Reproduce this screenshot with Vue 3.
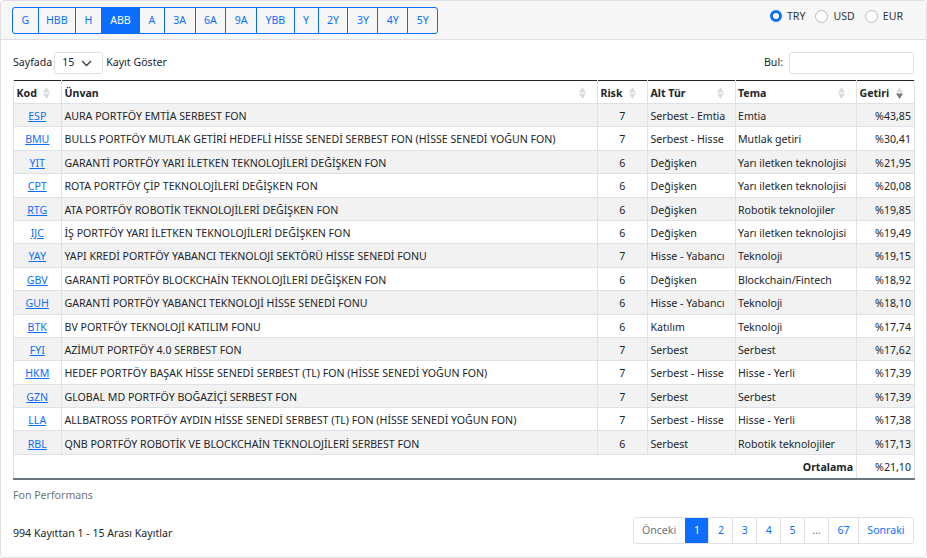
<script setup>
const periods = ['G', 'HBB', 'H', 'ABB', 'A', '3A', '6A', '9A', 'YBB', 'Y', '2Y', '3Y', '4Y', '5Y']
const currencies = ['TRY', 'USD', 'EUR']
const pages = ['1', '2', '3', '4', '5', '…', '67']

const funds = [
  ['ESP', 'AURA PORTFÖY EMTİA SERBEST FON', 7, 'Serbest - Emtia', 'Emtia', '%43,85'],
  ['BMU', 'BULLS PORTFÖY MUTLAK GETİRİ HEDEFLİ HİSSE SENEDİ SERBEST FON (HİSSE SENEDİ YOĞUN FON)', 7, 'Serbest - Hisse', 'Mutlak getiri', '%30,41'],
  ['YIT', 'GARANTİ PORTFÖY YARI İLETKEN TEKNOLOJİLERİ DEĞİŞKEN FON', 6, 'Değişken', 'Yarı iletken teknolojisi', '%21,95'],
  ['CPT', 'ROTA PORTFÖY ÇİP TEKNOLOJİLERİ DEĞİŞKEN FON', 6, 'Değişken', 'Yarı iletken teknolojisi', '%20,08'],
  ['RTG', 'ATA PORTFÖY ROBOTİK TEKNOLOJİLERİ DEĞİŞKEN FON', 6, 'Değişken', 'Robotik teknolojiler', '%19,85'],
  ['IJC', 'İŞ PORTFÖY YARI İLETKEN TEKNOLOJİLERİ DEĞİŞKEN FON', 6, 'Değişken', 'Yarı iletken teknolojisi', '%19,49'],
  ['YAY', 'YAPI KREDİ PORTFÖY YABANCI TEKNOLOJİ SEKTÖRÜ HİSSE SENEDİ FONU', 7, 'Hisse - Yabancı', 'Teknoloji', '%19,15'],
  ['GBV', 'GARANTİ PORTFÖY BLOCKCHAİN TEKNOLOJİLERİ DEĞİŞKEN FON', 6, 'Değişken', 'Blockchain/Fintech', '%18,92'],
  ['GUH', 'GARANTİ PORTFÖY YABANCI TEKNOLOJİ HİSSE SENEDİ FONU', 6, 'Hisse - Yabancı', 'Teknoloji', '%18,10'],
  ['BTK', 'BV PORTFÖY TEKNOLOJİ KATILIM FONU', 6, 'Katılım', 'Teknoloji', '%17,74'],
  ['FYI', 'AZİMUT PORTFÖY 4.0 SERBEST FON', 7, 'Serbest', 'Serbest', '%17,62'],
  ['HKM', 'HEDEF PORTFÖY BAŞAK HİSSE SENEDİ SERBEST (TL) FON (HİSSE SENEDİ YOĞUN FON)', 7, 'Serbest - Hisse', 'Hisse - Yerli', '%17,39'],
  ['GZN', 'GLOBAL MD PORTFÖY BOĞAZİÇİ SERBEST FON', 7, 'Serbest', 'Serbest', '%17,39'],
  ['LLA', 'ALLBATROSS PORTFÖY AYDIN HİSSE SENEDİ SERBEST (TL) FON (HİSSE SENEDİ YOĞUN FON)', 7, 'Serbest - Hisse', 'Hisse - Yerli', '%17,38'],
  ['RBL', 'QNB PORTFÖY ROBOTİK VE BLOCKCHAİN TEKNOLOJİLERİ SERBEST FON', 6, 'Serbest', 'Robotik teknolojiler', '%17,13']
]

const columns = ['Kod', 'Ünvan', 'Risk', 'Alt Tür', 'Tema']
</script>

<template>
  <div class="card">
    <header class="card__head">
      <div class="periods">
        <button v-for="p in periods" :key="p" :class="{ active: p === 'ABB' }">{{ p }}</button>
      </div>
      <div class="currencies">
        <label v-for="c in currencies" :key="c">
          <i :class="{ on: c === 'TRY' }" />{{ c }}
        </label>
      </div>
    </header>

    <div class="card__body">
      <div class="tools">
        <div class="tools__len">
          Sayfada
          <span class="select">15
            <svg width="11" height="7" viewBox="0 0 11 7"><path d="M1 1l4.500 4.500L10 1" fill="none" stroke="#343a40" stroke-width="1.300" /></svg>
          </span>
          Kayıt Göster
        </div>
        <div class="tools__find">Bul: <span class="input" /></div>
      </div>

      <table>
        <colgroup>
          <col class="c-kod"><col class="c-unvan"><col class="c-risk"><col class="c-alt"><col class="c-tema"><col class="c-getiri">
        </colgroup>
        <thead>
          <tr>
            <th v-for="c in columns" :key="c">
              {{ c }}
              <svg class="sort" width="7" height="12" viewBox="0 0 7 12"><path d="M3.500 0L7 5.500H0zM3.500 12L0 6.500h7z" fill="#dcdcdc" /></svg>
            </th>
            <th>
              Getiri
              <svg class="sort" width="7" height="12" viewBox="0 0 7 12"><path d="M3.500 0L7 5.500H0z" fill="#dcdcdc" /><path d="M3.500 12L0 6.500h7z" fill="#757575" /></svg>
            </th>
          </tr>
        </thead>
        <tbody>
          <tr v-for="f in funds" :key="f[0]">
            <td class="mid"><a href="#">{{ f[0] }}</a></td>
            <td>{{ f[1] }}</td>
            <td class="mid">{{ f[2] }}</td>
            <td>{{ f[3] }}</td>
            <td>{{ f[4] }}</td>
            <td class="end">{{ f[5] }}</td>
          </tr>
        </tbody>
        <tfoot>
          <tr>
            <td colspan="5" class="end"><b>Ortalama</b></td>
            <td class="end">%21,10</td>
          </tr>
        </tfoot>
      </table>
      <p class="caption">Fon Performans</p>

      <div class="foot">
        <span class="foot__info">994 Kayıttan 1 - 15 Arası Kayıtlar</span>
        <nav class="pager">
          <a class="off">Önceki</a>
          <a v-for="p in pages" :key="p" :class="{ active: p === '1', off: p === '…', gap: p === '…' }">{{ p }}</a>
          <a>Sonraki</a>
        </nav>
      </div>
    </div>
  </div>
</template>

<style>
html, body { margin: 0; background: #fff; }
</style>

<style scoped>
.card {
  box-sizing: border-box;
  width: 927px;
  height: 558px;
  border: 1px solid #dfdfdf;
  border-radius: 4px;
  color: #212529;
  font: 10.600px/1.5 "Noto Sans", sans-serif;
  overflow: hidden;
}

.card__head {
  display: flex;
  justify-content: space-between;
  height: 39px;
  padding: 6px 11px;
  box-sizing: border-box;
  background: #f7f7f7;
  border-bottom: 1px solid #dfdfdf;
}

.periods { display: flex; height: 27px; }

.periods button {
  padding: 0 8.450px;
  margin-left: -1px;
  border: 1px solid #0d6efd;
  background: transparent;
  color: #0d6efd;
  font: inherit;
}

.periods button:nth-child(2) { padding: 0 7.400px; }
.periods button:first-child { margin-left: 0; border-radius: 3px 0 0 3px; }
.periods button:last-child { border-radius: 0 3px 3px 0; }
.periods button.active { background: #0d6efd; color: #fff; }

.currencies { display: flex; gap: 10px; padding: 1px 12px 0 0; color: #333; }
.currencies label { display: flex; align-items: flex-start; line-height: 16px; }

.currencies i {
  width: 11px;
  height: 11px;
  margin: 2px 5px 0 0;
  border: 1px solid #bbb;
  border-radius: 50%;
  background: #fff;
}

.currencies i.on { border: 3.500px solid #0d6efd; width: 6px; height: 6px; }

.card__body { padding: 11px 12px 0 12px; }

.tools {
  display: flex;
  justify-content: space-between;
  align-items: center;
  height: 24px;
  margin-bottom: 5px;
}

.tools__len, .tools__find { display: flex; align-items: center; gap: 3px; }

.select {
  display: flex;
  align-items: center;
  justify-content: space-between;
  box-sizing: border-box;
  width: 49px;
  height: 22px;
  margin-left: -1px;
  padding: 0 10px 0 7px;
  border: 1px solid #dee2e6;
  border-radius: 3px;
}

.input {
  display: block;
  box-sizing: border-box;
  width: 125px;
  height: 22px;
  margin-left: 3px;
  border: 1px solid #dee2e6;
  border-radius: 3px;
}

table {
  width: 901px;
  table-layout: fixed;
  border-collapse: collapse;
  border-top: 1px solid #212529;
  border-left: 1px solid #dee2e6;
}

.c-kod { width: 48px; }
.c-unvan { width: 536px; }
.c-risk { width: 50px; }
.c-alt { width: 87.500px; }
.c-tema { width: 121.500px; }
.c-getiri { width: 58px; }

th, td {
  padding: 3.600px 3px 0 2.500px;
  height: 23.400px;
  border: 1px solid #dee2e6;
  border-top: 0;
  box-sizing: border-box;
  font-weight: 400;
  white-space: nowrap;
  overflow: hidden;
}

th { position: relative; font-weight: 700; text-align: left; height: 23px; }
.sort { position: absolute; right: 11px; top: 6px; }

tbody tr:nth-child(odd) td { background: #f2f2f2; }
.mid { text-align: center; }
.end { text-align: right; }
a { color: #0d6efd; }
b { font-weight: 700; }

tfoot td { height: 25px; padding-top: 2px; border-bottom: 2px solid #6c757d; }

.caption { margin: 8px 0 0; color: #6c757d; }

.foot {
  display: flex;
  justify-content: space-between;
  align-items: center;
  margin-top: 13px;
}

.foot__info { margin-top: 7px; }

.pager {
  display: flex;
  height: 27px;
  border: 1px solid #dee2e6;
  border-radius: 3px;
  box-sizing: border-box;
}

.pager a {
  padding: 0 8.420px;
  line-height: 25px;
  border-left: 1px solid #dee2e6;
}

.pager a:first-child { border-left: 0; }
.pager a.active { background: #0d6efd; color: #fff; border-color: #0d6efd; }
.pager a.off { color: #6c757d; }
.pager a.gap { padding: 0 7.300px; }
</style>
